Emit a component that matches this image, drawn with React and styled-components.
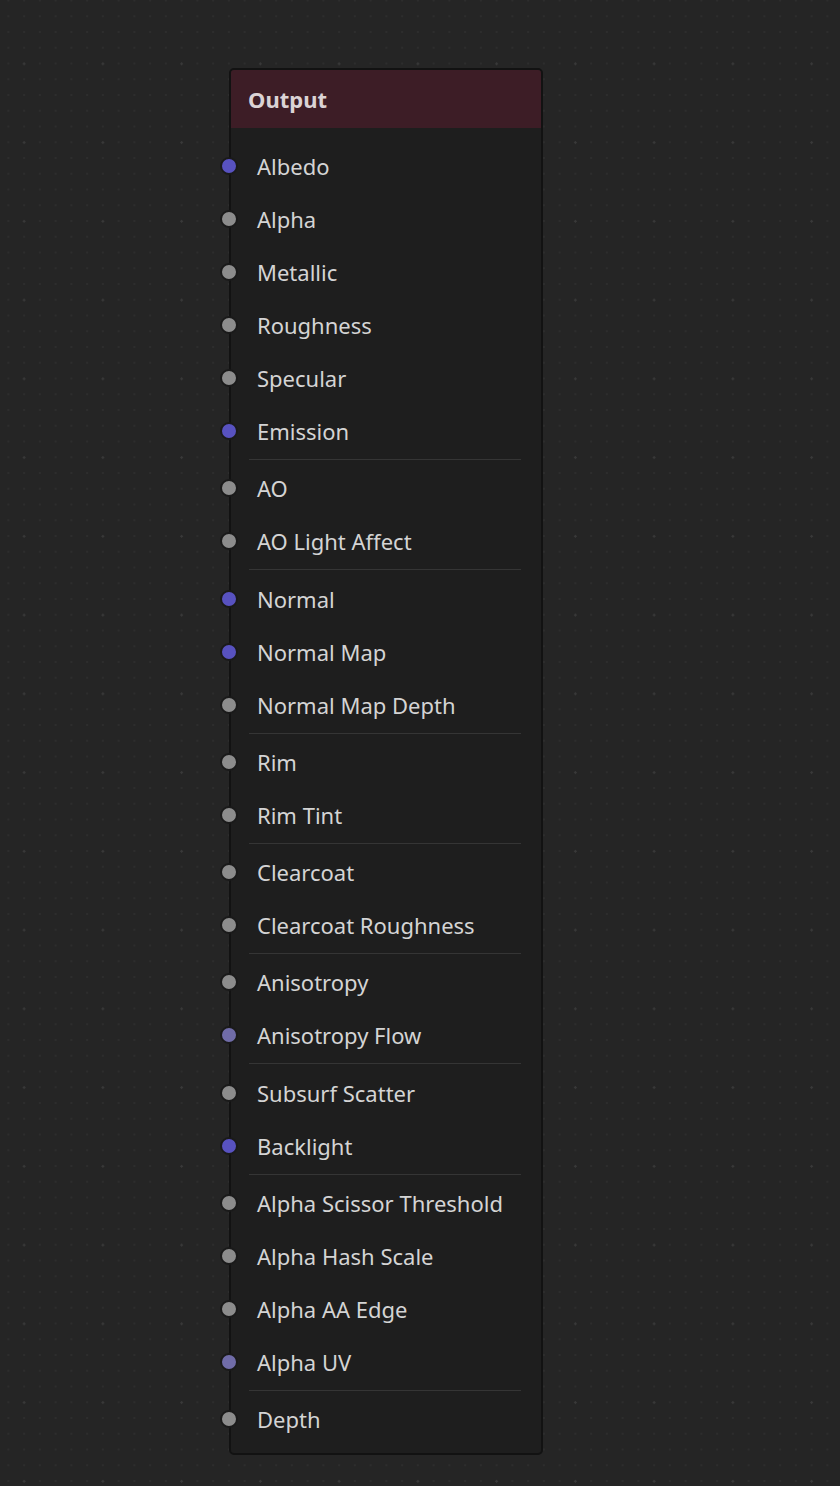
import React from "react";
import styled, { createGlobalStyle } from "styled-components";

const GlobalStyle = createGlobalStyle`
  html, body {
    margin: 0;
    padding: 0;
    background: #252525;
  }
  body {
    font-family: "Noto Sans", "Open Sans", sans-serif;
  }
`;

const Canvas = styled.div`
  min-height: 1486px;
  box-sizing: border-box;
  padding: 68px 0 0 229px;
  background-color: #252525;
  background-image:
    radial-gradient(circle, #393939 1.1px, transparent 1.3px),
    radial-gradient(circle, #2d2d2d 1.1px, transparent 1.3px);
  background-size: 78.75px 78.75px, 15.75px 15.75px;
  background-position: 63.5px 24.5px, 0.5px -7.4px;
`;

const Node = styled.div`
  width: 314px;
  box-sizing: border-box;
  border: 2px solid #121212;
  border-radius: 5px;
  background: #1e1e1e;
`;

const Header = styled.div`
  height: 58px;
  display: flex;
  align-items: center;
  padding-left: 17px;
  background: #3d1d26;
  border-radius: 3px 3px 0 0;
  color: #dbd3d5;
  font-size: 22px;
  font-weight: 700;
`;

const Body = styled.div`
  padding: 11.5px 0 7.5px;
`;

const Row = styled.div`
  position: relative;
  height: 53px;
  display: flex;
  align-items: center;
  padding-left: 26px;
  color: #d4d4d4;
  font-size: 22px;
`;

const Socket = styled.span`
  position: absolute;
  left: -11px;
  top: 50%;
  width: 14px;
  height: 14px;
  margin-top: -9px;
  border-radius: 50%;
  border: 2px solid #1a1a1a;
  background: ${(p) => p.$color};
`;

const Divider = styled.div`
  height: 1px;
  margin: 1.5px 20px 1.8px 18px;
  background: #353535;
`;

const BLUE = "#5852c0";
const GREY = "#8c8c8c";
const MUTED = "#706ca8";

const groups = [
  [
    ["Albedo", BLUE],
    ["Alpha", GREY],
    ["Metallic", GREY],
    ["Roughness", GREY],
    ["Specular", GREY],
    ["Emission", BLUE],
  ],
  [
    ["AO", GREY],
    ["AO Light Affect", GREY],
  ],
  [
    ["Normal", BLUE],
    ["Normal Map", BLUE],
    ["Normal Map Depth", GREY],
  ],
  [
    ["Rim", GREY],
    ["Rim Tint", GREY],
  ],
  [
    ["Clearcoat", GREY],
    ["Clearcoat Roughness", GREY],
  ],
  [
    ["Anisotropy", GREY],
    ["Anisotropy Flow", MUTED],
  ],
  [
    ["Subsurf Scatter", GREY],
    ["Backlight", BLUE],
  ],
  [
    ["Alpha Scissor Threshold", GREY],
    ["Alpha Hash Scale", GREY],
    ["Alpha AA Edge", GREY],
    ["Alpha UV", MUTED],
  ],
  [["Depth", GREY]],
];

export default function App() {
  return (
    <>
      <GlobalStyle />
      <Canvas>
        <Node>
          <Header>Output</Header>
          <Body>
            {groups.map((group, gi) => (
              <React.Fragment key={gi}>
                {gi > 0 && <Divider />}
                {group.map(([label, color]) => (
                  <Row key={label}>
                    <Socket $color={color} />
                    {label}
                  </Row>
                ))}
              </React.Fragment>
            ))}
          </Body>
        </Node>
      </Canvas>
    </>
  );
}
